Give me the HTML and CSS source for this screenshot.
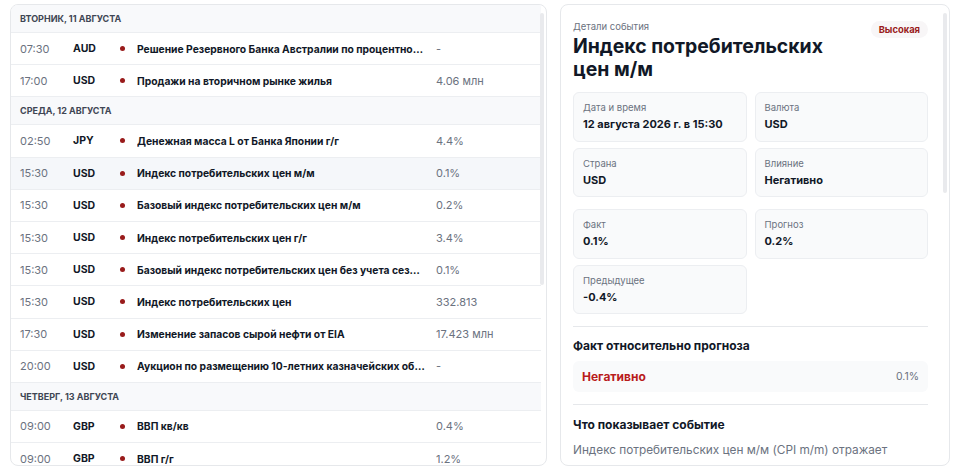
FILE: index.html
```html
<!DOCTYPE html>
<html lang="ru">
<head>
    <meta charset="UTF-8">
    <meta name="viewport" content="width=device-width, initial-scale=1.0">
    <title>Экономический календарь</title>
    <link rel="stylesheet" href="styles.css">
</head>
<body>

<div class="page">
    <section class="panel events">
        <div class="day">Вторник, 11 августа</div>
        <div class="row">
            <span class="time">07:30</span><span class="cur">AUD</span><span class="dot"></span>
            <span class="name">Решение Резервного Банка Австралии по процентной ставке</span><span class="val">-</span>
        </div>
        <div class="row">
            <span class="time">17:00</span><span class="cur">USD</span><span class="dot"></span>
            <span class="name">Продажи на вторичном рынке жилья</span><span class="val">4.06 млн</span>
        </div>

        <div class="day">Среда, 12 августа</div>
        <div class="row">
            <span class="time">02:50</span><span class="cur">JPY</span><span class="dot"></span>
            <span class="name">Денежная масса L от Банка Японии г/г</span><span class="val">4.4%</span>
        </div>
        <div class="row selected">
            <span class="time">15:30</span><span class="cur">USD</span><span class="dot"></span>
            <span class="name">Индекс потребительских цен м/м</span><span class="val">0.1%</span>
        </div>
        <div class="row">
            <span class="time">15:30</span><span class="cur">USD</span><span class="dot"></span>
            <span class="name">Базовый индекс потребительских цен м/м</span><span class="val">0.2%</span>
        </div>
        <div class="row">
            <span class="time">15:30</span><span class="cur">USD</span><span class="dot"></span>
            <span class="name">Индекс потребительских цен г/г</span><span class="val">3.4%</span>
        </div>
        <div class="row">
            <span class="time">15:30</span><span class="cur">USD</span><span class="dot"></span>
            <span class="name">Базовый индекс потребительских цен без учета сезонных колебаний</span><span class="val">0.1%</span>
        </div>
        <div class="row">
            <span class="time">15:30</span><span class="cur">USD</span><span class="dot"></span>
            <span class="name">Индекс потребительских цен</span><span class="val">332.813</span>
        </div>
        <div class="row">
            <span class="time">17:30</span><span class="cur">USD</span><span class="dot"></span>
            <span class="name">Изменение запасов сырой нефти от EIA</span><span class="val">17.423 млн</span>
        </div>
        <div class="row">
            <span class="time">20:00</span><span class="cur">USD</span><span class="dot"></span>
            <span class="name">Аукцион по размещению 10-летних казначейских облигаций</span><span class="val">-</span>
        </div>

        <div class="day">Четверг, 13 августа</div>
        <div class="row">
            <span class="time">09:00</span><span class="cur">GBP</span><span class="dot"></span>
            <span class="name">ВВП кв/кв</span><span class="val">0.4%</span>
        </div>
        <div class="row">
            <span class="time">09:00</span><span class="cur">GBP</span><span class="dot"></span>
            <span class="name">ВВП г/г</span><span class="val">1.2%</span>
        </div>

        <div class="scroll-thumb list-thumb"></div>
    </section>

    <section class="panel details">
        <div class="head">
            <div>
                <div class="label">Детали события</div>
                <h1>Индекс потребительских цен м/м</h1>
            </div>
            <span class="badge">Высокая</span>
        </div>

        <div class="cards">
            <div class="card"><div class="label">Дата и время</div><div class="value">12 августа 2026 г. в 15:30</div></div>
            <div class="card"><div class="label">Валюта</div><div class="value">USD</div></div>
            <div class="card"><div class="label">Страна</div><div class="value">USD</div></div>
            <div class="card"><div class="label">Влияние</div><div class="value">Негативно</div></div>
        </div>

        <div class="cards second">
            <div class="card"><div class="label">Факт</div><div class="value">0.1%</div></div>
            <div class="card"><div class="label">Прогноз</div><div class="value">0.2%</div></div>
            <div class="card"><div class="label">Предыдущее</div><div class="value">-0.4%</div></div>
        </div>

        <hr>
        <h2>Факт относительно прогноза</h2>
        <div class="compare">
            <span class="neg">Негативно</span>
            <span class="diff">0.1%</span>
        </div>

        <hr class="wide">
        <h2 class="about">Что показывает событие</h2>
        <p>Индекс потребительских цен м/м (CPI m/m) отражает</p>

        <div class="scroll-thumb detail-thumb"></div>
    </section>
</div>

</body>
</html>
```

FILE: styles.css
```css
body {
    font-family: Inter, "Noto Sans", sans-serif;
    background-color: #fff;
    color: #111827;
    margin: 0;
    padding: 0;
}
.page {
    display: grid;
    grid-template-columns: 537px 390px;
    gap: 13px;
    padding: 4px 10px;
    height: 470px;
    box-sizing: border-box;
}
.panel {
    position: relative;
    height: 462px;
    box-sizing: border-box;
    overflow: hidden;
    border: 1px solid #e6e8eb;
    border-radius: 8px;
    background-color: #fff;
}
.scroll-thumb {
    position: absolute;
    top: 8px;
    right: 2px;
    width: 4px;
    border-radius: 2px;
    background-color: #e9eaed;
}
.list-thumb {
    height: 272px;
}
.detail-thumb {
    height: 180px;
}

/* event list */
.events {
    padding-right: 5px;
}
.day {
    height: 28px;
    box-sizing: border-box;
    padding: 0 9px;
    display: flex;
    align-items: center;
    background-color: #f8f9fb;
    border-bottom: 1px solid #eceef1;
    font-size: 9px;
    font-weight: 700;
    text-transform: uppercase;
    color: #3f4654;
}
.row {
    display: grid;
    grid-template-columns: 53px 46px 18px 290px 1fr;
    column-gap: 0;
    align-items: center;
    height: 32.2px;
    box-sizing: border-box;
    padding: 0 9px;
    border-bottom: 1px solid #eceef1;
    font-size: 11px;
}
.row.selected {
    background-color: #f5f7fa;
}
.time, .val {
    color: #6b7280;
}
.val {
    margin-left: 9px;
}
.cur {
    font-size: 10.5px;
    font-weight: 700;
}
.dot {
    width: 5px;
    height: 5px;
    border-radius: 50%;
    background-color: #991b1b;
    margin-left: 1px;
}
.name {
    font-size: 10.3px;
    font-weight: 700;
    white-space: nowrap;
    overflow: hidden;
    text-overflow: ellipsis;
    padding-right: 2px;
}

/* details */
.details {
    padding: 16px 21px 0 12px;
}
.head {
    display: flex;
    justify-content: space-between;
    align-items: flex-start;
}
.label {
    font-size: 9.5px;
    line-height: 12px;
    color: #6b7280;
}
h1 {
    font-size: 19.4px;
    line-height: 23px;
    font-weight: 700;
    margin: 2px 0 0;
    max-width: 270px;
}
.badge {
    padding: 3px 8px;
    border-radius: 9px;
    background-color: #f8f6f7;
    color: #991b1b;
    font-size: 9.4px;
    line-height: 11px;
    font-weight: 700;
}
.cards {
    display: grid;
    grid-template-columns: 1fr 1fr;
    column-gap: 8px;
    row-gap: 6px;
    margin-top: 11px;
}
.cards.second {
    margin-top: 12px;
}
.card {
    padding: 9px 9px 9.5px;
    background-color: #f9fafb;
    border: 1px solid #eceef1;
    border-radius: 6px;
}
.value {
    margin-top: 3px;
    font-size: 11px;
    line-height: 14px;
    font-weight: 700;
}
hr {
    border: 0;
    border-top: 1px solid #e6e8eb;
    margin: 11.5px 0 11.5px;
}
hr.wide {
    margin-top: 12px;
}
h2 {
    font-size: 12px;
    line-height: 16px;
    font-weight: 700;
    margin: 0;
}
h2.about {
    margin-top: 12px;
}
.compare {
    display: flex;
    justify-content: space-between;
    align-items: center;
    margin-top: 7px;
    padding: 7px 9px;
    background-color: #f9fafb;
    border-radius: 6px;
    font-size: 12px;
    line-height: 17px;
}
.neg {
    color: #b91c1c;
    font-weight: 700;
}
.diff {
    color: #6b7280;
    font-size: 10.5px;
}
p {
    margin: 8px 0 0;
    font-size: 11.8px;
    line-height: 18px;
    color: #6b7280;
}
```
